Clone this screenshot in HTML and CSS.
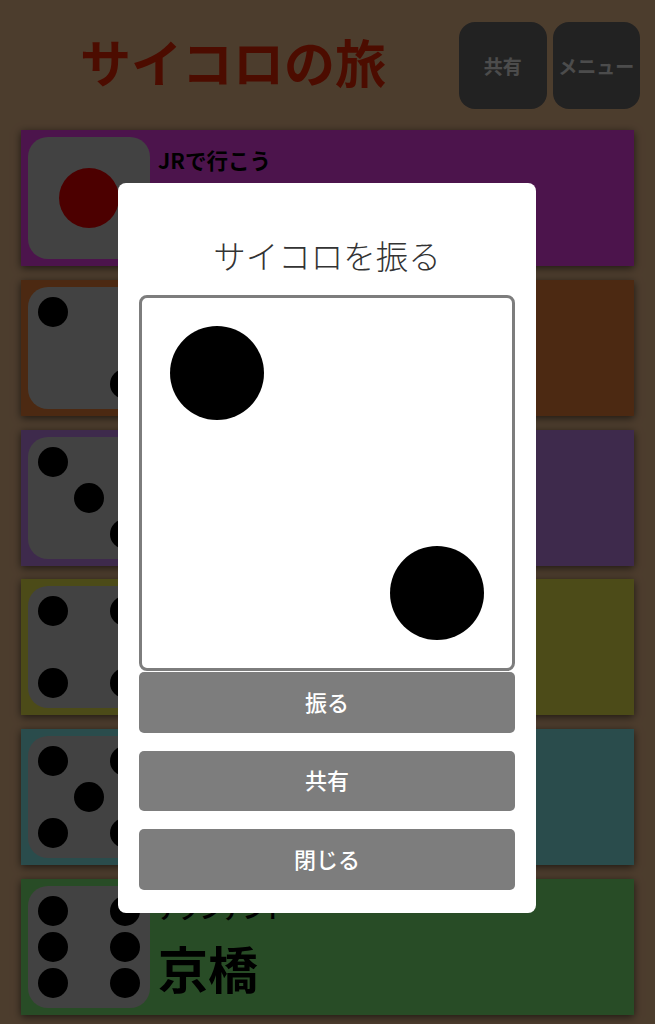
FILE: index.html
```html
<!DOCTYPE html>
<html lang="ja">
<head>
    <meta charset="UTF-8">
    <meta name="viewport" content="width=device-width, initial-scale=1">
    <title>サイコロの旅</title>
    <link rel="stylesheet" href="styles.css">
</head>
<body>
    <header class="header">
        <h1 class="app-title">サイコロの旅</h1>
        <button class="btn-head">共有</button>
        <button class="btn-head">メニュー</button>
    </header>
    <main class="cards">
        <section class="card card-1">
            <div class="die die-one"><span class="pip pip-red"></span></div>
            <div class="card-text"><p class="card-label">JRで行こう</p></div>
        </section>
        <section class="card card-2">
            <div class="die">
                <span class="pip at-tl"></span>
                <span class="pip at-br"></span>
            </div>
        </section>
        <section class="card card-3">
            <div class="die">
                <span class="pip at-tl"></span>
                <span class="pip at-mc"></span>
                <span class="pip at-br"></span>
            </div>
        </section>
        <section class="card card-4">
            <div class="die">
                <span class="pip at-tl"></span>
                <span class="pip at-tr"></span>
                <span class="pip at-bl"></span>
                <span class="pip at-br"></span>
            </div>
        </section>
        <section class="card card-5">
            <div class="die">
                <span class="pip at-tl"></span>
                <span class="pip at-tr"></span>
                <span class="pip at-mc"></span>
                <span class="pip at-bl"></span>
                <span class="pip at-br"></span>
            </div>
        </section>
        <section class="card card-6">
            <div class="die">
                <span class="pip at-tl"></span>
                <span class="pip at-tr"></span>
                <span class="pip at-ml"></span>
                <span class="pip at-mr"></span>
                <span class="pip at-bl"></span>
                <span class="pip at-br"></span>
            </div>
            <div class="card-text">
                <p class="card-label">アクシデント</p>
                <p class="card-place">京橋</p>
            </div>
        </section>
    </main>
    <div class="overlay">
        <div class="modal">
            <h2 class="modal-title">サイコロを振る</h2>
            <div class="die die-big">
                <span class="pip at-tl"></span>
                <span class="pip at-br"></span>
            </div>
            <div class="modal-buttons">
                <button class="btn-modal">振る</button>
                <button class="btn-modal">共有</button>
                <button class="btn-modal">閉じる</button>
            </div>
        </div>
    </div>
</body>
</html>
```

FILE: styles.css
```css
:root {
    --bg: #ffcb98;
    --die: #dcdcdc;
    --btn: #7d7d7d;
}
* {
    box-sizing: border-box;
}
body {
    background: var(--bg);
    margin: 0;
    height: 1024px;
    overflow: hidden;
    font-family: 'Noto Sans CJK JP', 'Noto Sans', sans-serif;
}
p, h1, h2 {
    margin: 0;
}
.header {
    display: flex;
    align-items: flex-start;
    gap: 6px;
    height: 130px;
    padding: 22px 15px 0 13px;
}
.app-title {
    flex: 1;
    color: #ff2a00;
    font-size: 51px;
    font-weight: 700;
    line-height: 78px;
    text-align: center;
}
.btn-head {
    width: 87.5px;
    height: 87px;
    padding: 0;
    background: #727272;
    color: #fff;
    border: none;
    border-radius: 16px;
    font-family: inherit;
    font-size: 19px;
    font-weight: 700;
}
.cards {
    display: flex;
    flex-direction: column;
    gap: 13.8px;
    padding: 0 21px;
}
.card {
    display: flex;
    gap: 8px;
    height: 136px;
    padding: 7px;
    box-shadow: 0 2px 8px rgba(0,0,0,0.6);
}
.card-1 { background: #ff44ff; }
.card-2 { background: #ff8a3c; }
.card-3 { background: #d08cff; }
.card-4 { background: #fffa52; }
.card-5 { background: #8cffff; }
.card-6 { background: #88ff80; }
.card-text {
    padding-top: 9px;
}
.card-label {
    color: #000;
    font-size: 21.5px;
    font-weight: 700;
    line-height: 28px;
}
.card-place {
    color: #000;
    font-size: 50px;
    font-weight: 700;
    line-height: 72px;
    margin-top: 8px;
}
.die {
    flex: none;
    display: grid;
    grid-template-columns: repeat(3, 30px);
    grid-template-rows: repeat(3, 30px);
    justify-content: space-between;
    align-content: space-between;
    width: 122px;
    height: 122px;
    padding: 10px;
    background: var(--die);
    border-radius: 20px;
}
.pip {
    background: #000;
    border-radius: 50%;
}
.at-tl { grid-area: 1 / 1; }
.at-tr { grid-area: 1 / 3; }
.at-ml { grid-area: 2 / 1; }
.at-mc { grid-area: 2 / 2; }
.at-mr { grid-area: 2 / 3; }
.at-bl { grid-area: 3 / 1; }
.at-br { grid-area: 3 / 3; }
.die-one {
    grid-template-columns: 60px;
    grid-template-rows: 60px;
    justify-content: center;
    align-content: center;
}
.pip-red {
    background: #ff0000;
}
.overlay {
    position: fixed;
    inset: 0;
    display: flex;
    justify-content: center;
    align-items: flex-start;
    padding: 183px 1px 0 0;
    background: rgba(0,0,0,0.7);
}
.modal {
    width: 418px;
    height: 730px;
    padding: 47px 21px 0;
    background: #fff;
    border-radius: 8px;
}
.modal-title {
    height: 65px;
    color: #333;
    font-size: 32.5px;
    font-weight: 300;
    line-height: 50px;
    text-align: center;
}
.die-big {
    grid-template-columns: repeat(3, 94px);
    grid-template-rows: repeat(3, 94px);
    width: 376px;
    height: 376px;
    padding: 28px;
    background: #fff;
    border: 3px solid var(--btn);
    border-radius: 8px;
}
.modal-buttons {
    display: flex;
    flex-direction: column;
    gap: 18px;
    margin-top: 1px;
}
.btn-modal {
    height: 60.5px;
    padding: 0 0 3px;
    background: var(--btn);
    color: #fff;
    border: none;
    border-radius: 5px;
    font-family: inherit;
    font-size: 22px;
    font-weight: 500;
}
```
